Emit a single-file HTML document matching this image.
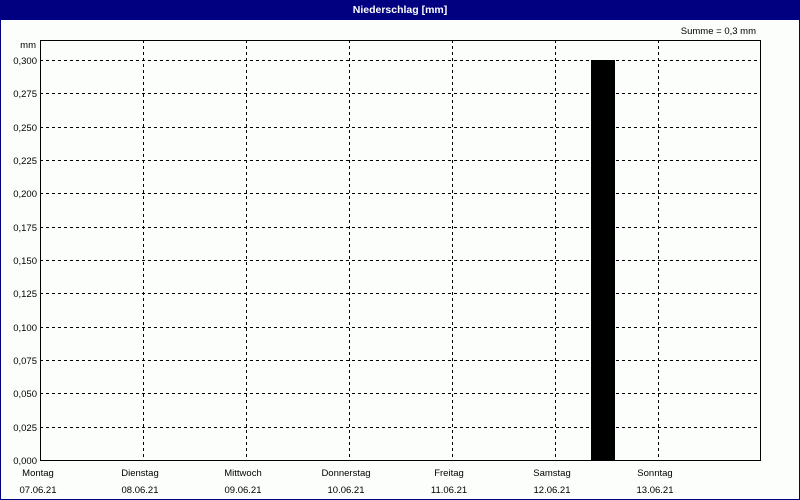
<!DOCTYPE html>
<html><head><meta charset="utf-8"><style>
html,body{margin:0;padding:0;width:800px;height:500px;overflow:hidden;background:#000080}
svg{display:block}
text{font-family:"Liberation Sans",sans-serif;font-size:9.5px;fill:#000}
</style></head><body>
<svg width="800" height="500" xmlns="http://www.w3.org/2000/svg">
<rect x="0" y="0" width="800" height="500" fill="#000080"/>
<rect x="1" y="20" width="798" height="479" fill="#fcfefc"/>
<text x="400" y="13" text-anchor="middle" style="font-weight:bold;fill:#fff;font-size:10.5px">Niederschlag [mm]</text>
<text x="756" y="34" text-anchor="end">Summe = 0,3 mm</text>
<text x="36" y="48" text-anchor="end">mm</text>
<g stroke="#000" stroke-width="1" stroke-dasharray="3,3" fill="none" shape-rendering="crispEdges">
<path d="M143.5 40V460M246.5 40V460M349.5 40V460M452.5 40V460M555.5 40V460M658.5 40V460"/>
<path d="M40 60.5H760M40 93.5H760M40 127.5H760M40 160.5H760M40 193.5H760M40 227.5H760M40 260.5H760M40 293.5H760M40 327.5H760M40 360.5H760M40 393.5H760M40 427.5H760"/>
</g>
<rect x="591" y="60" width="24" height="400" fill="#000"/>
<rect x="40.5" y="40.5" width="720" height="420" fill="none" stroke="#000" stroke-width="1" shape-rendering="crispEdges"/>
<g text-anchor="end">
<text x="37" y="64">0,300</text><text x="37" y="97">0,275</text><text x="37" y="131">0,250</text>
<text x="37" y="164">0,225</text><text x="37" y="197">0,200</text><text x="37" y="231">0,175</text>
<text x="37" y="264">0,150</text><text x="37" y="297">0,125</text><text x="37" y="331">0,100</text>
<text x="37" y="364">0,075</text><text x="37" y="397">0,050</text><text x="37" y="431">0,025</text>
<text x="37" y="464">0,000</text>
</g>
<g text-anchor="middle">
<text x="38" y="476">Montag</text><text x="38" y="493">07.06.21</text>
<text x="140" y="476">Dienstag</text><text x="140" y="493">08.06.21</text>
<text x="243" y="476">Mittwoch</text><text x="243" y="493">09.06.21</text>
<text x="346" y="476">Donnerstag</text><text x="346" y="493">10.06.21</text>
<text x="449" y="476">Freitag</text><text x="449" y="493">11.06.21</text>
<text x="552" y="476">Samstag</text><text x="552" y="493">12.06.21</text>
<text x="655" y="476">Sonntag</text><text x="655" y="493">13.06.21</text>
</g>
</svg>
</body></html>
